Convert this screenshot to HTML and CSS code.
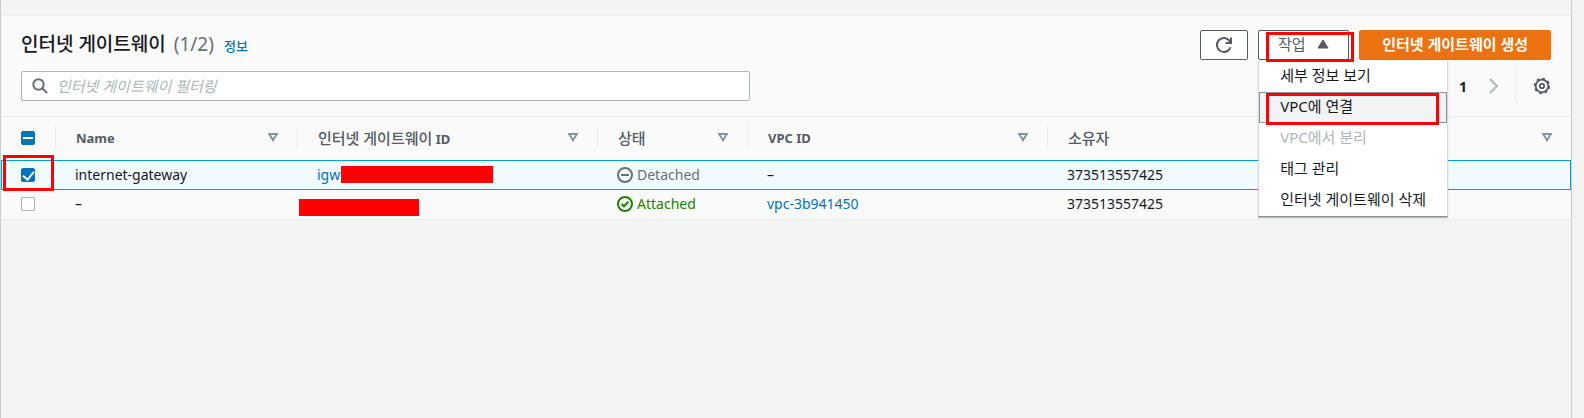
FILE: index.html
```html
<!DOCTYPE html>
<html lang="ko">
<head>
    <meta charset="UTF-8">
    <meta name="viewport" content="width=device-width, initial-scale=1.0">
    <title>인터넷 게이트웨이</title>
    <link rel="stylesheet" href="styles.css">
</head>
<body>
    <main class="page">
        <section class="panel">
            <div class="panel-header">
                <div class="title-row">
                    <h1>인터넷 게이트웨이 <span class="counter">(1/2)</span></h1>
                    <a class="info-link" href="#">정보</a>
                    <div class="actions">
                        <button class="btn btn-icon" type="button" aria-label="새로 고침">
                            <svg width="18" height="18" viewBox="0 0 18 18" fill="none" stroke="currentColor" stroke-width="2">
                                <path d="M15.6 11.2A7 7 0 1 1 14.6 4.8L16 6.6"/>
                                <path d="M16 1.5V7H10.6"/>
                            </svg>
                        </button>
                        <div class="dropdown">
                            <button class="btn btn-dropdown" type="button" aria-expanded="true">
                                작업
                                <svg width="12" height="10" viewBox="0 0 12 10" fill="currentColor" stroke="currentColor" stroke-linejoin="round"><path d="M6 1L11 9H1Z"/></svg>
                            </button>
                            <span class="mark mark-button"></span>
                            <div class="menu">
                                <button class="menu-item" type="button">세부 정보 보기</button>
                                <button class="menu-item active" type="button">VPC에 연결<span class="mark mark-item"></span></button>
                                <button class="menu-item" type="button" disabled>VPC에서 분리</button>
                                <button class="menu-item" type="button">태그 관리</button>
                                <button class="menu-item" type="button">인터넷 게이트웨이 삭제</button>
                            </div>
                        </div>
                        <button class="btn btn-primary" type="button">인터넷 게이트웨이 생성</button>
                    </div>
                </div>

                <div class="filter-row">
                    <label class="search">
                        <svg width="16" height="16" viewBox="0 0 16 16" fill="none" stroke="currentColor" stroke-width="2">
                            <circle cx="6.5" cy="6.5" r="5.2"/>
                            <path d="M10.3 10.3L15 15"/>
                        </svg>
                        <input type="text" placeholder="인터넷 게이트웨이 필터링" aria-label="인터넷 게이트웨이 필터링">
                    </label>
                    <div class="pagination">
                        <button class="page-number" type="button">1</button>
                        <button class="page-next" type="button" aria-label="다음">
                            <svg width="10" height="16" viewBox="0 0 10 16" fill="none" stroke="currentColor" stroke-width="2"><path d="M1 1L8 8L1 15"/></svg>
                        </button>
                        <button class="settings" type="button" aria-label="설정">
                            <svg width="18" height="18" viewBox="0 0 18 18" fill="none" stroke="currentColor">
                                <circle cx="9" cy="9" r="6.3" stroke-width="1.8"/>
                                <circle cx="9" cy="9" r="7.4" stroke-width="1.6" stroke-dasharray="2.9 2.9"/>
                                <circle cx="9" cy="9" r="2.2" stroke-width="1.8"/>
                            </svg>
                        </button>
                    </div>
                </div>
            </div>

            <table class="gateways">
                <colgroup>
                    <col class="col-check">
                    <col class="col-name">
                    <col class="col-wide">
                    <col class="col-state">
                    <col class="col-wide">
                    <col>
                </colgroup>
                <thead>
                    <tr>
                        <th><input class="mixed" type="checkbox" aria-label="모두 선택"></th>
                        <th><div class="head">Name <svg class="sort" viewBox="0 0 10 9"><path d="M1.2 1H8.8L5 7.2Z"/></svg></div></th>
                        <th><div class="head"><span><span class="ko">인터넷 게이트웨이</span> ID</span> <svg class="sort" viewBox="0 0 10 9"><path d="M1.2 1H8.8L5 7.2Z"/></svg></div></th>
                        <th><div class="head"><span class="ko">상태</span> <svg class="sort" viewBox="0 0 10 9"><path d="M1.2 1H8.8L5 7.2Z"/></svg></div></th>
                        <th><div class="head">VPC ID <svg class="sort" viewBox="0 0 10 9"><path d="M1.2 1H8.8L5 7.2Z"/></svg></div></th>
                        <th><div class="head"><span class="ko">소유자</span> <svg class="sort" viewBox="0 0 10 9"><path d="M1.2 1H8.8L5 7.2Z"/></svg></div></th>
                    </tr>
                </thead>
                <tbody>
                    <tr class="selected">
                        <td><input type="checkbox" checked aria-label="internet-gateway 선택"><span class="mark mark-check"></span></td>
                        <td>internet-gateway</td>
                        <td><a href="#">igw-</a><span class="redacted redacted-long"></span></td>
                        <td>
                            <span class="status">
                                <svg width="16" height="16" viewBox="0 0 16 16" fill="none" stroke="currentColor" stroke-width="2"><circle cx="8" cy="8" r="7"/><path d="M4 8H12"/></svg>
                                Detached
                            </span>
                        </td>
                        <td>–</td>
                        <td>373513557425</td>
                    </tr>
                    <tr>
                        <td><input type="checkbox" aria-label="선택"></td>
                        <td>–</td>
                        <td><span class="redacted redacted-short"></span></td>
                        <td>
                            <span class="status attached">
                                <svg width="16" height="16" viewBox="0 0 16 16" fill="none" stroke="currentColor" stroke-width="2"><circle cx="8" cy="8" r="7"/><path d="M4.5 8L7 10.3L11.3 5.8"/></svg>
                                Attached
                            </span>
                        </td>
                        <td><a href="#">vpc-3b941450</a></td>
                        <td>373513557425</td>
                    </tr>
                </tbody>
            </table>
        </section>
    </main>
</body>
</html>
```
FILE: styles.css
```css
* {
    margin: 0;
    padding: 0;
    box-sizing: border-box;
}

body {
    font-family: "Noto Sans", "Noto Sans CJK KR", sans-serif;
    font-size: 14px;
    color: #16191f;
    background: #f2f3f3;
}

button,
input {
    font-family: inherit;
}

button {
    cursor: pointer;
}

svg {
    display: block;
    flex: none;
}

a {
    color: #0073bb;
    text-decoration: none;
}

.page {
    min-height: 100vh;
    margin-right: 12px;
    padding-top: 15px;
    border-left: 1px solid #c6cbcb;
    border-right: 1px solid #c6cbcb;
}

.panel {
    background: #fafafa;
    border-top: 1px solid #eaeded;
    border-bottom: 1px solid #eaeded;
}

.panel-header {
    padding: 14px 20px 15px;
    border-bottom: 1px solid #eaeded;
}

.title-row {
    display: flex;
    align-items: center;
    height: 30px;
}

h1 {
    padding-bottom: 2px;
    font-size: 19px;
    font-weight: 500;
    line-height: 28px;
}

.counter {
    margin-left: 3px;
    color: #687078;
    font-weight: 400;
}

.info-link {
    margin-left: 10px;
    font-size: 13px;
    font-weight: 500;
}

.actions {
    display: flex;
    gap: 10px;
    margin-left: auto;
}

.btn {
    display: flex;
    align-items: center;
    justify-content: center;
    height: 30px;
    border: 1px solid #545b64;
    border-radius: 2px;
    background: #fff;
    color: #545b64;
    font-size: 15px;
    line-height: 20px;
}

.btn-icon {
    width: 48px;
}

.btn-dropdown {
    gap: 12px;
    width: 91px;
    padding-bottom: 2px;
}

.btn-primary {
    padding: 0 22px 2px;
    border-color: #ec7211;
    background: #ec7211;
    color: #fff;
    font-weight: 700;
}

.dropdown {
    position: relative;
}

.menu {
    position: absolute;
    top: 31px;
    left: 0;
    z-index: 2;
    width: 190px;
    background: #fff;
    border-left: 1px solid #d5dbdb;
    border-right: 1px solid #d5dbdb;
    border-bottom: 1px solid #879596;
    box-shadow: 0 1px 1px rgba(0, 28, 36, 0.3);
}

.menu-item {
    position: relative;
    display: block;
    width: 100%;
    height: 31px;
    padding: 0 20px 4px;
    border: 1px solid transparent;
    background: none;
    color: #16191f;
    font-size: 15px;
    line-height: 20px;
    text-align: left;
    white-space: nowrap;
}

.menu-item.active {
    border-color: #879596;
    background: #f2f3f3;
}

.menu-item:disabled {
    color: #aab7b8;
}

.filter-row {
    display: flex;
    align-items: center;
    margin-top: 11px;
}

.search {
    display: flex;
    align-items: center;
    gap: 9px;
    width: calc(50% - 36px);
    min-width: 200px;
    height: 30px;
    padding: 0 10px;
    border: 1px solid #aab7b8;
    border-radius: 2px;
    background: #fff;
    color: #687078;
}

.search input {
    flex: 1;
    border: none;
    outline: none;
    background: none;
    font-size: 15px;
}

.search input::placeholder {
    color: #aab7b8;
    font-style: italic;
}

.pagination {
    display: flex;
    align-items: center;
    height: 30px;
    margin-left: auto;
}

.pagination button {
    border: none;
    background: none;
}

.page-number {
    color: #16191f;
    font-size: 14px;
    font-weight: 700;
}

.page-next {
    padding: 0 16px 0 22px;
    color: #aab7b8;
}

.pagination .settings {
    display: flex;
    align-items: center;
    height: 30px;
    padding-left: 17px;
    border-left: 1px solid #eaeded;
    color: #545b64;
}

.gateways {
    width: 100%;
    table-layout: fixed;
    border-collapse: separate;
    border-spacing: 0;
}

.col-check {
    width: 54px;
}

.col-name {
    width: 242px;
}

.col-wide {
    width: 300px;
}

.col-state {
    width: 150px;
}

th {
    height: 43px;
    padding-bottom: 2px;
    color: #545b64;
    font-size: 13px;
    font-weight: 700;
    text-align: left;
}

th:first-child,
td:first-child {
    padding-left: 20px;
}

.head {
    display: flex;
    align-items: center;
    justify-content: space-between;
    height: 21px;
    padding: 0 19px 0 20px;
    border-left: 1px solid #eaeded;
    white-space: nowrap;
}

.ko {
    font-size: 15px;
    font-weight: 500;
}

.sort {
    width: 10px;
    height: 9px;
    fill: none;
    stroke: #879596;
    stroke-width: 2;
}

td {
    position: relative;
    height: 29px;
    padding-left: 20px;
    padding-bottom: 1px;
    line-height: 20px;
}

.selected td {
    height: 30px;
    border-top: 1px solid #00a1c9;
    border-bottom: 1px solid #00a1c9;
    background: #f1faff;
}

.selected td:last-child {
    border-right: 1px solid #00a1c9;
}

.selected td:first-child {
    padding-left: 19px;
    border-left: 1px solid #00a1c9;
}

input[type="checkbox"] {
    appearance: none;
    display: block;
    width: 14px;
    height: 14px;
    border: 1px solid #aab7b8;
    border-radius: 2px;
    background: #fff;
}

input[type="checkbox"]:checked,
input[type="checkbox"].mixed {
    border-color: #0073bb;
    background: #0073bb;
}

input[type="checkbox"]:checked::after {
    content: "";
    display: block;
    width: 5px;
    height: 9px;
    margin: 0 auto;
    border: solid #fff;
    border-width: 0 2px 2px 0;
    transform: rotate(40deg);
}

input[type="checkbox"].mixed::after {
    content: "";
    display: block;
    width: 10px;
    height: 2px;
    margin: 5px auto;
    background: #fff;
}

.status {
    display: flex;
    align-items: center;
    gap: 4px;
    color: #687078;
}

.status.attached {
    color: #1d8102;
}

/* red highlights and covered ids */
.mark {
    position: absolute;
    z-index: 3;
    border: 3px solid #f00;
    pointer-events: none;
}

.mark-button {
    top: 2px;
    left: 8px;
    width: 88px;
    height: 30px;
}

.mark-item {
    top: 0;
    left: 6px;
    right: 7px;
    height: 32px;
}

.mark-check {
    top: -6px;
    left: 1px;
    width: 51px;
    height: 36px;
}

.redacted {
    position: absolute;
    height: 17px;
    background: #f00;
}

.redacted-long {
    top: 5px;
    left: 44px;
    width: 152px;
}

.redacted-short {
    top: 9px;
    left: 2px;
    width: 120px;
}
```
